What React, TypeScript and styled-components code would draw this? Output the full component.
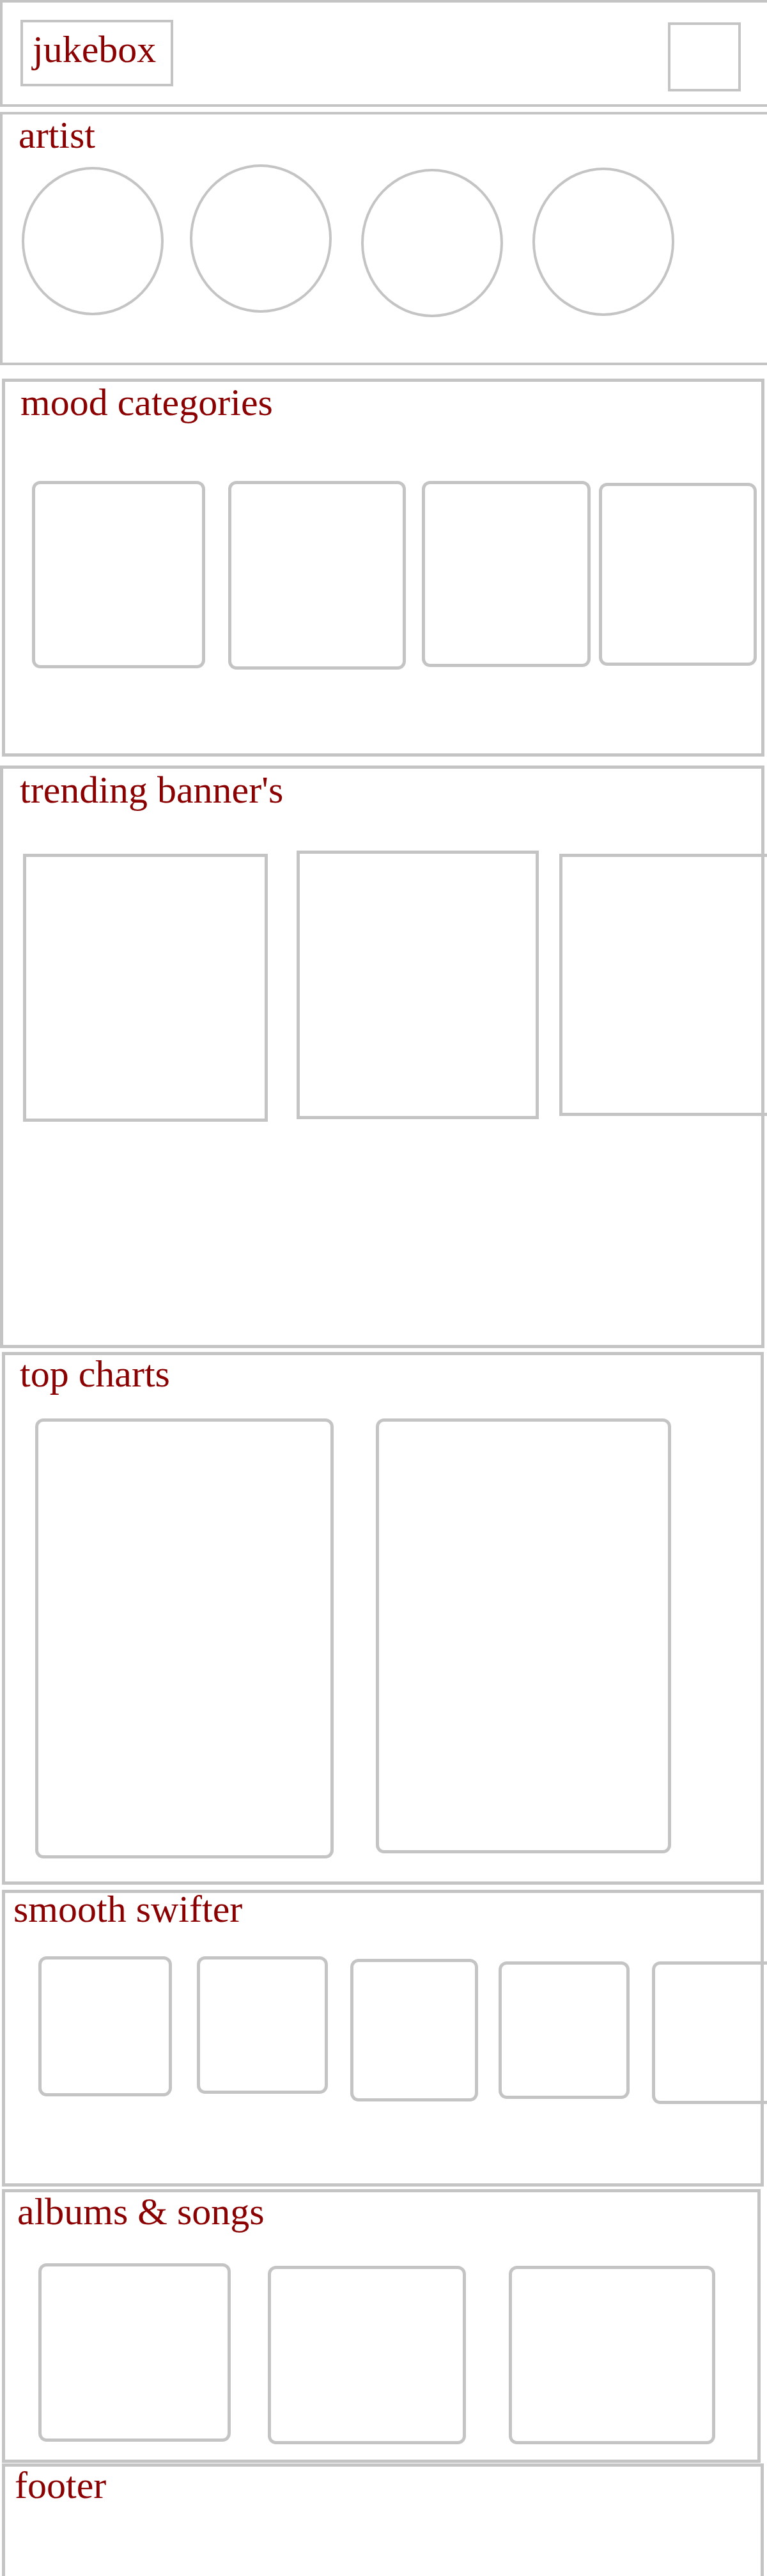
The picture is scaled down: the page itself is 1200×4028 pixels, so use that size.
import React from "react";
import styled, {createGlobalStyle} from "styled-components";

const line = "#c4c4c4";
const ink = "#8b0000";

const GlobalStyle = createGlobalStyle`
html {
  overflow: hidden;
}
body {
  margin: 0;
  background: #fff;
  font-family: "Liberation Serif", "Times New Roman", serif;
}
*, *::before, *::after {
  box-sizing: border-box;
}
`

type BoxProps = { $w: number; $h: number; $ml?: number; $mt?: number };
type SectionProps = { $top: number; $left: number; $width: number; $height: number; $border?: number };

const Page = styled.div`
display: flex;
flex-direction: column;
align-items: flex-start;
`

const Section = styled.section<SectionProps>`
flex-shrink: 0;
margin-top: ${p => p.$top}px;
margin-left: ${p => p.$left}px;
width: ${p => p.$width}px;
height: ${p => p.$height}px;
border: ${p => p.$border ?? 5}px solid ${line};
`

const Header = styled.header`
flex-shrink: 0;
display: flex;
align-items: flex-start;
width: 1220px;
height: 167px;
border: 4px solid ${line};
`

const Logo = styled.div`
width: 239px;
height: 104px;
margin: 27px 0 0 28px;
padding: 12px 0 0 15px;
border: 4px solid ${line};
color: ${ink};
font-size: 60px;
line-height: 1;
`

const MenuButton = styled.button`
width: 114px;
height: 108px;
margin: 31px 0 0 774px;
padding: 0;
background: transparent;
border: 4px solid ${line};
`

const Title = styled.h2<{ $ml: number; $mt: number }>`
margin: ${p => p.$mt}px 0 0 ${p => p.$ml}px;
color: ${ink};
font-size: 60px;
font-weight: normal;
line-height: 1;
`

const Row = styled.div<{ $mt: number }>`
display: flex;
align-items: flex-start;
margin-top: ${p => p.$mt}px;
`

const Circle = styled.div<BoxProps>`
flex-shrink: 0;
width: ${p => p.$w}px;
height: ${p => p.$h}px;
margin: ${p => p.$mt ?? 0}px 0 0 ${p => p.$ml ?? 0}px;
border: 4px solid ${line};
border-radius: 50%;
`

const Card = styled.div<BoxProps>`
flex-shrink: 0;
width: ${p => p.$w}px;
height: ${p => p.$h}px;
margin: ${p => p.$mt ?? 0}px 0 0 ${p => p.$ml ?? 0}px;
border: 5px solid ${line};
border-radius: 13px;
`

const Banner = styled(Card)`
border-radius: 0;
`

const artists = [
    {ml: 30, mt: 4}, {ml: 41, mt: 0}, {ml: 46, mt: 7}, {ml: 46, mt: 5},
];
const moods = [
    {w: 271, h: 293, ml: 42, mt: 0}, {w: 278, h: 295, ml: 36, mt: 0},
    {w: 264, h: 291, ml: 25, mt: 0}, {w: 247, h: 286, ml: 13, mt: 3},
];
const banners = [
    {w: 383, h: 419, ml: 31, mt: 5}, {w: 379, h: 420, ml: 45, mt: 0}, {w: 383, h: 410, ml: 32, mt: 5},
];
const charts = [
    {w: 467, h: 688, ml: 47, mt: 0}, {w: 462, h: 680, ml: 66, mt: 0},
];
const swifters = [
    {w: 209, h: 219, ml: 52, mt: 0}, {w: 205, h: 215, ml: 39, mt: 0}, {w: 200, h: 223, ml: 35, mt: 4},
    {w: 205, h: 215, ml: 32, mt: 8}, {w: 208, h: 223, ml: 35, mt: 8},
];
const albums = [
    {w: 301, h: 279, ml: 52, mt: 0}, {w: 310, h: 279, ml: 58, mt: 4}, {w: 323, h: 279, ml: 67, mt: 4},
];

export default function App() {
    return (
        <Page>
            <GlobalStyle/>
            <Header>
                <Logo>jukebox</Logo>
                <MenuButton aria-label="menu"/>
            </Header>

            <Section $top={8} $left={0} $width={1220} $height={396} $border={4}>
                <Title $ml={25} $mt={2}>artist</Title>
                <Row $mt={16}>
                    {artists.map((a, i) => <Circle key={i} $w={222} $h={232} $ml={a.ml} $mt={a.mt}/>)}
                </Row>
            </Section>

            <Section $top={21} $left={3} $width={1193} $height={591}>
                <Title $ml={24} $mt={2}>mood categories</Title>
                <Row $mt={93}>
                    {moods.map((c, i) => <Card key={i} $w={c.w} $h={c.h} $ml={c.ml} $mt={c.mt}/>)}
                </Row>
            </Section>

            <Section $top={14} $left={0} $width={1196} $height={911}>
                <Title $ml={26} $mt={3}>trending banner's</Title>
                <Row $mt={65}>
                    {banners.map((b, i) => <Banner key={i} $w={b.w} $h={b.h} $ml={b.ml} $mt={b.mt}/>)}
                </Row>
            </Section>

            <Section $top={6} $left={3} $width={1192} $height={833}>
                <Title $ml={23} $mt={-1}>top charts</Title>
                <Row $mt={40}>
                    {charts.map((c, i) => <Card key={i} $w={c.w} $h={c.h} $ml={c.ml} $mt={c.mt}/>)}
                </Row>
            </Section>

            <Section $top={8} $left={3} $width={1192} $height={464}>
                <Title $ml={13} $mt={-5}>smooth swifter</Title>
                <Row $mt={44}>
                    {swifters.map((c, i) => <Card key={i} $w={c.w} $h={c.h} $ml={c.ml} $mt={c.mt}/>)}
                </Row>
            </Section>

            <Section $top={4} $left={3} $width={1187} $height={428}>
                <Title $ml={19} $mt={0}>albums &amp; songs</Title>
                <Row $mt={51}>
                    {albums.map((c, i) => <Card key={i} $w={c.w} $h={c.h} $ml={c.ml} $mt={c.mt}/>)}
                </Row>
            </Section>

            <Section $top={1} $left={3} $width={1192} $height={220}>
                <Title $ml={15} $mt={-1}>footer</Title>
            </Section>
        </Page>
    );
};
